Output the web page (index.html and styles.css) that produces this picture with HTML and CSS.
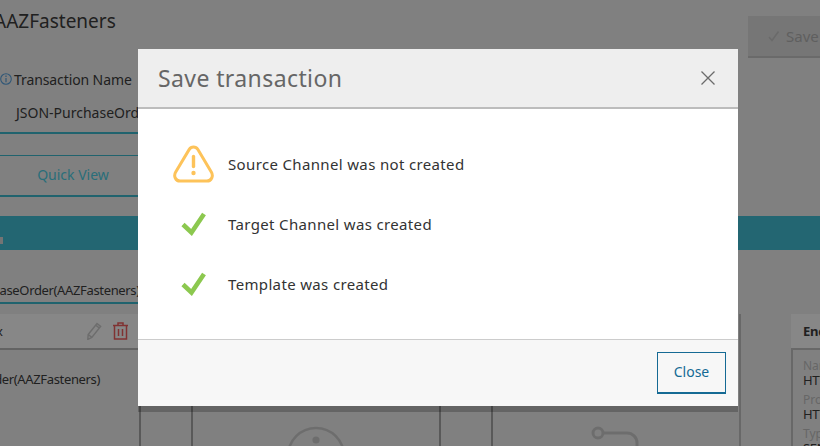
FILE: index.html
```html
<!DOCTYPE html>
<html lang="en">
  <head>
    <title>Save transaction</title>
    <meta charset="UTF-8" />
    <link rel="stylesheet" href="styles.css">
  </head>
  <body>
    <div class="page">
      <div class="page-top">
        <h1 class="partner-name">AAZFasteners</h1>
        <button type="button" class="save-btn">
          <svg width="12" height="12" viewBox="0 0 12 12"><path d="M1 7l3 3.500L10.500 1.500" fill="none" stroke="#c8c8c8" stroke-width="1.600"/></svg>
          Save
        </button>
      </div>
      <div class="name-label">
        <svg width="12" height="12" viewBox="0 0 12 12"><circle cx="6" cy="6" r="5.300" fill="none" stroke="#5aa4e0" stroke-width="1.100"/><path d="M6 5v4.200M6 2.600v1.300" stroke="#5aa4e0" stroke-width="1.200"/></svg>
        Transaction Name
      </div>
      <div class="name-value">JSON-PurchaseOrder</div>
      <div class="quick-view">Quick View</div>
      <div class="teal-bar"><span class="teal-mark"></span></div>
      <div class="order-input">PurchaseOrder(AAZFasteners)_EDI</div>
      <div class="canvas">
        <div class="left-col">
          <div class="panel-head">
            <span>x</span>
            <span class="panel-icons">
              <svg width="15" height="18" viewBox="0 0 15 18"><path d="M1.200 12.500L10 1.500l3.600 2.900-8.800 11-4 2zM1.200 12.500l3.600 2.900M8.700 3.100l3.600 2.900" fill="none" stroke="#cfcfcf" stroke-width="1.500"/></svg>
              <svg width="15" height="18" viewBox="0 0 15 18"><path d="M0 3.500h15M5 3.500V1h5v2.500M1.500 3.500V17h12V3.500M5.500 7v7M9.500 7v7" fill="none" stroke="#f25f5f" stroke-width="1.500"/></svg>
            </span>
          </div>
          <div class="panel-text"><span>PurchaseOrder(AAZFasteners)</span></div>
        </div>
        <div class="flow">
          <div class="flow-gap"></div>
          <div class="flow-box">
            <svg width="60" height="60" viewBox="0 0 60 60"><circle cx="30" cy="30" r="28" fill="none" stroke="#cfcfcf" stroke-width="2.600"/><circle cx="30" cy="14" r="3.600" fill="#cfcfcf"/></svg>
          </div>
          <div class="flow-gap"></div>
          <div class="flow-box">
            <svg width="60" height="60" viewBox="0 0 60 60"><circle cx="12" cy="7" r="5" fill="none" stroke="#cfcfcf" stroke-width="3"/><path d="M17 7h24a10 10 0 0 1 10 10v10" fill="none" stroke="#cfcfcf" stroke-width="3"/></svg>
          </div>
        </div>
        <div class="endpoint">
          <div class="endpoint-title">Endpoint</div>
          <div class="endpoint-body">
            <div class="endpoint-key">Name</div>
            <div class="endpoint-val">HTTP</div>
            <div class="endpoint-key">Protocol</div>
            <div class="endpoint-val">HTTP</div>
            <div class="endpoint-key">Type</div>
            <div class="endpoint-val">SEND</div>
          </div>
        </div>
      </div>
    </div>

    <div class="backdrop">
      <div class="modal">
        <div class="modal-head">
          <h2>Save transaction</h2>
          <svg width="16" height="16" viewBox="0 0 16 16"><path d="M1.500 1.500l13 13M14.500 1.500l-13 13" stroke="#6b6b6b" stroke-width="1.300"/></svg>
        </div>
        <div class="modal-body">
          <div class="status-row">
            <span class="status-icon">
              <svg width="41" height="38" viewBox="0 0 41 38"><path d="M20.500 2c-2 0-3.400 1-4.400 2.600L2.700 27c-2.400 4-.2 9 4.300 9h27c4.500 0 6.700-5 4.300-9L24.900 4.600C23.900 3 22.500 2 20.500 2z" fill="none" stroke="#fdc35a" stroke-width="3"/><path d="M20.500 11.500v10" stroke="#fdc35a" stroke-width="3.400" stroke-linecap="round"/><circle cx="20.500" cy="28" r="2.200" fill="#fdc35a"/></svg>
            </span>
            Source Channel was not created
          </div>
          <div class="status-row">
            <span class="status-icon">
              <svg width="26" height="24" viewBox="0 0 26 24"><path d="M2 12.500l8.500 8L23 2" fill="none" stroke="#8cc84f" stroke-width="4.600"/></svg>
            </span>
            Target Channel was created
          </div>
          <div class="status-row">
            <span class="status-icon">
              <svg width="26" height="24" viewBox="0 0 26 24"><path d="M2 12.500l8.500 8L23 2" fill="none" stroke="#8cc84f" stroke-width="4.600"/></svg>
            </span>
            Template was created
          </div>
        </div>
        <div class="modal-foot">
          <button type="button" class="close-btn">Close</button>
        </div>
      </div>
    </div>
  </body>
</html>
```
FILE: styles.css
```css
html, body {
  margin: 0;
  padding: 0;
  height: 100%;
  overflow: hidden;
}

body {
  position: relative;
  width: 820px;
  height: 446px;
  font-family: "Noto Sans", "Open Sans", sans-serif;
  color: #3d3d3d;
  background-color: #f2f2f2;
}

/* page behind the dialog, scrolled a bit to the left */
.page {
  margin-left: -8px;
  width: 828px;
  height: 446px;
  overflow: hidden;
}

.page-top {
  display: flex;
  justify-content: space-between;
  align-items: flex-start;
  height: 63px;
}

.partner-name {
  margin: 8px 0 0 2px;
  font-size: 19px;
  font-weight: 400;
}

.save-btn {
  display: flex;
  align-items: center;
  gap: 6px;
  margin-top: 16px;
  width: 72px;
  height: 42px;
  padding: 0 0 0 20px;
  border: 0;
  border-bottom: 2px solid #c8c8c8;
  background-color: #dfdfdf;
  font: 15px "Noto Sans", sans-serif;
  color: #b4b4b4;
  white-space: nowrap;
  overflow: hidden;
}

.name-label {
  display: flex;
  align-items: center;
  gap: 2px;
  margin-left: 8px;
  height: 32px;
  font-size: 14px;
  letter-spacing: -0.1px;
}

.name-value {
  box-sizing: border-box;
  width: 162px;
  height: 39px;
  padding-left: 24px;
  line-height: 36px;
  font-size: 14px;
  white-space: nowrap;
  overflow: hidden;
  border-bottom: 2px solid #3ebbd0;
}

.quick-view {
  box-sizing: border-box;
  margin-top: 21px;
  width: 162px;
  height: 42px;
  line-height: 38px;
  text-align: center;
  border-top: 1px solid #3ebbd0;
  border-bottom: 2px solid #3ebbd0;
  font-size: 14px;
  color: #4fd0e6;
}

.teal-bar {
  box-sizing: border-box;
  margin-top: 19px;
  height: 34px;
  padding-top: 21px;
  background-color: #42c0d7;
}

.teal-mark {
  display: block;
  width: 11px;
  height: 7px;
  background-color: #dcdcdc;
}

.order-input {
  box-sizing: border-box;
  margin-top: 28px;
  width: 300px;
  height: 26px;
  line-height: 24px;
  text-indent: -26px;
  border-bottom: 2px solid #3ebbd0;
  font-size: 13px;
  letter-spacing: -0.35px;
  white-space: nowrap;
  overflow: hidden;
}

.canvas {
  display: flex;
  margin-top: 10px;
  height: 132px;
}

.left-col {
  flex-shrink: 0;
  width: 147px;
}

.panel-head {
  display: flex;
  justify-content: space-between;
  align-items: center;
  box-sizing: border-box;
  height: 36px;
  padding: 0 11px 0 4px;
  background-color: #fff;
  border-bottom: 2px solid #bbb;
  font-size: 13px;
}

.panel-icons {
  display: flex;
  align-items: center;
  gap: 11px;
}

.panel-text {
  display: flex;
  justify-content: flex-end;
  width: 108px;
  margin-top: 20px;
  white-space: nowrap;
  font-size: 13px;
  letter-spacing: -0.35px;
}

.flow {
  display: flex;
  flex-shrink: 0;
  border-right: 2px solid #c4c4c4;
}

.flow-gap {
  box-sizing: border-box;
  width: 52px;
  border-left: 2px solid #a8a8a8;
}

.flow-box {
  box-sizing: border-box;
  display: flex;
  justify-content: center;
  width: 248px;
  padding-top: 112px;
  border-left: 2px solid #a8a8a8;
}

.endpoint {
  flex-shrink: 0;
  margin-left: 50px;
  width: 120px;
}

.endpoint-title {
  box-sizing: border-box;
  height: 34px;
  padding-left: 12px;
  line-height: 34px;
  background-color: #fff;
  font-size: 13px;
  font-weight: 700;
  letter-spacing: -0.3px;
}

.endpoint-body {
  height: 98px;
  padding: 9px 0 0 10px;
  border-top: 2px solid #c4c4c4;
  border-left: 2px solid #c4c4c4;
  line-height: 14px;
}

.endpoint-key {
  font-size: 12px;
  color: #c2c2c2;
}

.endpoint-val {
  margin-bottom: 6px;
  font-size: 13px;
  letter-spacing: -0.3px;
}

.backdrop {
  position: absolute;
  inset: 0;
  background-color: rgba(0, 0, 0, 0.47);
}

.modal {
  position: absolute;
  left: 138px;
  top: 49px;
  width: 600px;
  height: 357px;
  display: flex;
  flex-direction: column;
  background-color: #fff;
  box-shadow: 0 6px 0 rgba(0, 0, 0, 0.22);
}

.modal-head {
  box-sizing: border-box;
  display: flex;
  justify-content: space-between;
  align-items: center;
  height: 60px;
  padding: 0 22px 0 20px;
  background-color: #eee;
  border-bottom: 2px solid #bcbcbc;
}

.modal-head h2 {
  margin: 0;
  font-size: 23px;
  font-weight: 400;
  color: #666;
  letter-spacing: 0.4px;
}

.modal-body {
  flex: 1;
  padding: 25px 0 0 35px;
}

.status-row {
  display: flex;
  align-items: center;
  gap: 14px;
  height: 60px;
  font-size: 15px;
  color: #333;
  letter-spacing: 0.35px;
}

.status-icon {
  display: flex;
  justify-content: center;
  flex-shrink: 0;
  width: 41px;
}

.modal-foot {
  box-sizing: border-box;
  display: flex;
  justify-content: flex-end;
  align-items: center;
  height: 67px;
  padding: 0 12px;
  background-color: #f7f7f7;
  border-top: 1px solid #ccc;
}

.close-btn {
  width: 69px;
  height: 42px;
  padding: 0 0 2px 0;
  background: transparent;
  border: 1px solid #156a94;
  border-bottom-width: 2px;
  font: 14px "Noto Sans", sans-serif;
  color: #156a94;
}
```
